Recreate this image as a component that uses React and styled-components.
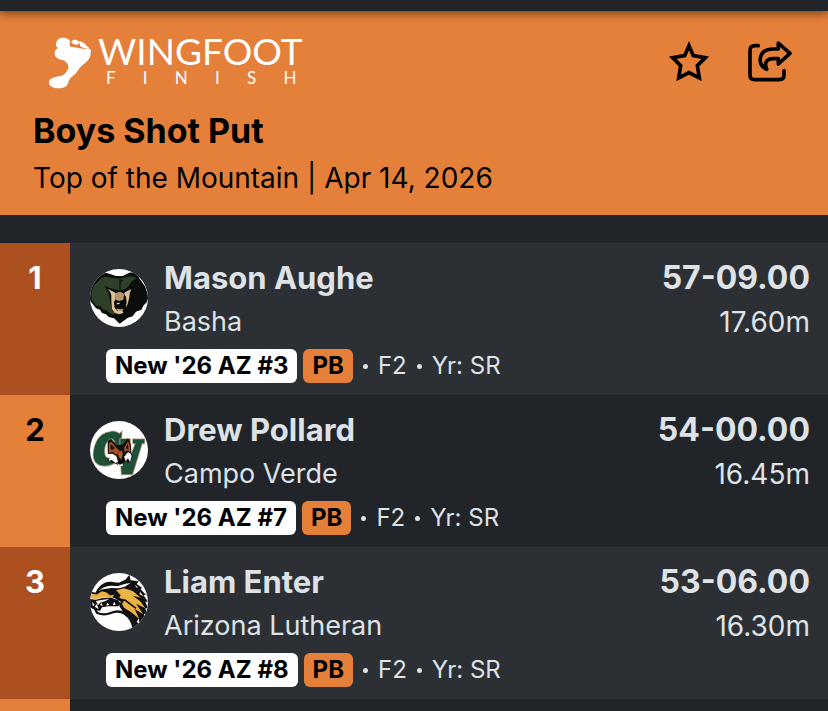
import styled, { createGlobalStyle } from 'styled-components';

const GlobalStyle = createGlobalStyle`
	* {
		box-sizing: border-box;
	}
	body {
		margin: 0;
		background: #212529;
		color: #dee2e6;
		font-family: 'Inter', 'Liberation Sans', sans-serif;
	}
`;

const NavEdge = styled.div`
	position: relative;
	height: 11px;
	background: #212529;
	box-shadow: 0 2px 10px rgba(0, 0, 0, 0.55);
`;

const Header = styled.header`
	padding: 26px 33px 14px;
	background: #e4803a;
	color: #000;
`;

const TopBar = styled.div`
	display: flex;
	justify-content: space-between;
	align-items: flex-start;
	height: 52px;
	margin-bottom: 18px;
	padding-left: 15px;
`;

const Brand = styled.a`
	display: flex;
	gap: 6px;
	color: #fff;
	text-decoration: none;
`;

const BrandText = styled.span`
	display: flex;
	flex-direction: column;
	font-family: 'Lato', 'Liberation Sans', sans-serif;
`;

const BrandName = styled.span`
	font-size: 37px;
	line-height: 28px;
`;

const BrandSub = styled.span`
	display: flex;
	justify-content: space-between;
	padding: 0 6px 0 8px;
	font-size: 17px;
	line-height: 26px;
`;

const Actions = styled.div`
	display: flex;
	align-items: center;
	gap: 38px;
	padding: 4px 3px 0 0;
`;

const IconButton = styled.button`
	display: flex;
	padding: 0;
	border: 0;
	background: none;
	color: #000;
	cursor: pointer;
`;

const Title = styled.h1`
	margin: 0;
	font-size: 34px;
	font-weight: 700;
	line-height: 48px;
`;

const Meet = styled.p`
	margin: 0;
	font-size: 28px;
	line-height: 46px;
`;

const Table = styled.table`
	width: 100%;
	margin-top: 28px;
	border-collapse: collapse;
`;

const Row = styled.tr`
	background: ${({ $odd }) => ($odd ? '#2c3034' : '#212529')};
	box-shadow: inset 0 1px 0 ${({ $odd }) => ($odd ? '#32373b' : '#1d2124')};
`;

const Rank = styled.th`
	width: 70px;
	padding: 13px 0 12px;
	background: ${({ $odd }) => ($odd ? '#ad501f' : '#e4803a')};
	color: ${({ $odd }) => ($odd ? '#fff' : '#000')};
	font-size: 31px;
	font-weight: 700;
	line-height: 44px;
	vertical-align: top;
`;

const Cell = styled.td`
	padding: 13px 20px 12px;
	vertical-align: top;
`;

const MarkCell = styled(Cell)`
	padding-right: 18px;
	text-align: right;
	white-space: nowrap;
`;

const Athlete = styled.div`
	display: flex;
	gap: 16px;
`;

const Avatar = styled.svg`
	width: 58px;
	height: 58px;
	margin-top: 13px;
	border-radius: 50%;
	background: #fff;
	flex-shrink: 0;
`;

const Strong = styled.div`
	font-size: ${({ $large }) => ($large ? '32px' : '31px')};
	font-weight: 700;
	line-height: 44px;
`;

const Sub = styled.div`
	font-size: ${({ $large }) => ($large ? '28px' : '27px')};
	line-height: 44px;
`;

const Notes = styled.div`
	display: flex;
	align-items: center;
	gap: 6px;
	margin-top: 5px;
	padding-left: 16px;
	font-size: 24px;
	line-height: 34px;
	white-space: nowrap;
`;

const Badge = styled.span`
	padding: 0 9px;
	border-radius: 6px;
	background: ${({ $accent }) => ($accent ? '#e4803a' : '#fff')};
	color: #000;
	font-weight: 700;
`;

const Extra = styled.span`
	display: flex;
	align-items: center;
	gap: 10px;
	padding-left: 4px;
`;

const Dot = styled.i`
	width: 5px;
	height: 5px;
	border-radius: 50%;
	background: currentColor;
`;

function FootIcon() {
	return (
		<svg width='44' height='52' viewBox='54 52 132 156' fill='#fff' aria-hidden='true'>
			<path d='M78 76C79 60 88 53 101 54C116 55 122 63 119 72C118 78 121 83 128 82C140 84 155 88 172 88C182 86 185 92 182 100C183 112 174 125 160 134C150 142 143 155 136 163C126 171 118 175 116 185C114 200 101 207 84 206C66 205 55 196 57 186C60 174 75 172 92 169C105 165 112 155 115 144C116 134 110 126 99 121C83 119 73 112 74 99C74 91 81 88 84 84C80 82 78 80 78 76Z' />
			<path d='M124 66C130 58 142 60 144 64C145 68 151 72 145 74C138 76 126 73 124 66Z' />
			<path d='M145 65C154 64 160 69 165 73C169 77 172 79 171 83C166 89 156 83 150 79C151 73 148 71 145 65Z' />
			<path d='M168 80C174 80 178 84 177 88L168 87Z' />
		</svg>
	);
}

function StarIcon() {
	return (
		<svg width='42' height='41' viewBox='54 62 126 123' fill='none' stroke='currentColor' strokeWidth='11' aria-hidden='true'>
			<path d='M117 76L130 106L166 112L142 136L148 173L117 157L86 173L92 136L68 112L104 106Z' />
		</svg>
	);
}

function ShareIcon() {
	return (
		<svg width='44' height='41' viewBox='295 62 132 123' fill='none' stroke='currentColor' strokeWidth='11' strokeLinecap='round' strokeLinejoin='round' aria-hidden='true'>
			<path d='M326 76H316Q301 76 301 90V164Q301 178 315 178H388Q403 178 403 165V151' />
			<path d='M386 68L421 99L386 131V115H371C350 115 343 128 351 147C336 140 330 128 332 114C335 94 350 86 370 86H386Z' />
		</svg>
	);
}

function BearLogo() {
	return (
		<Avatar viewBox='6 6 174 174' role='img' aria-label='Basha'>
			<path fill='#0c0e0d' d='M30 32C38 20 52 14 64 20L84 27H104L122 18C136 14 150 20 154 34L172 60L182 90L176 106L166 116L160 128L144 134L134 148L120 152L95 170L78 154L62 150L54 142L42 138L36 128L24 124L4 98L8 60Z' />
			<path fill='#2e4027' d='M32 42C40 28 54 27 64 31C84 37 106 34 126 28L146 32L130 44L122 58L108 68L96 70L74 66L54 60L64 78L68 104L72 128L80 138L78 144L64 138L55 130L45 128L36 117L23 116L10 94C8 72 16 54 32 42Z' />
			<path fill='none' stroke='#10150f' strokeWidth='4' d='M96 32V70M96 46L104 38' />
			<path fill='#0c0e0d' d='M50 56L74 67L96 72L118 67L140 58L132 80L126 116L118 132L104 142L84 142L74 132L66 104L62 80Z' />
			<path fill='#dcc198' d='M60 66L78 75L84 80L82 96L78 106L80 122L88 132L104 132L106 138L94 142L80 138L72 126L70 104L70 84L66 74Z' />
			<path fill='#dcc198' d='M130 66L112 75L108 80L114 90L116 106L113 122L119 112L124 90L126 76Z' />
			<path fill='#b99570' d='M84 78L96 74L108 80L106 98L94 102L82 98Z' />
			<path fill='#080909' d='M80 106L94 102L110 104L114 112L108 121L94 124L82 120Z' />
			<path fill='#e5e5e5' d='M87 108L96 107L93 112L86 112Z' />
			<path fill='#c7a67c' d='M84 125L98 127L106 125L104 131L90 132Z' />
		</Avatar>
	);
}

function CampoLogo() {
	return (
		<Avatar viewBox='31 25 174 174' role='img' aria-label='Campo Verde'>
			<g stroke='#b6a58b' strokeWidth='5' paintOrder='stroke' fill='#1e5038'>
				<path d='M89 59C101 53 113 59 119 64L126 58L124 96H108C106 80 96 73 87 81C75 91 70 116 77 131C84 142 99 137 109 130L111 146C97 158 78 162 61 157C44 151 39 135 43 113C48 82 65 61 89 59Z' />
				<path d='M122 79H151V92H147L149 142L168 92H160V80H194V92H187L158 185H126L122 130Z' />
			</g>
			<path fill='#101010' d='M84 120L84 85L94 78L111 96L129 96L145 77L154 97L155 120L160 132L151 149L144 151L137 143L130 158L116 158L104 151L83 144L90 133Z' />
			<path fill='#a84e21' d='M88 91L95 87L111 106L121 116L112 127L98 118L87 122Z' />
			<path fill='#a84e21' d='M145 86L151 100L152 119L143 113L135 119L133 106Z' />
			<path fill='#191414' d='M93 94L106 106L98 112L92 109ZM144 93L147 108L138 108Z' />
			<path fill='#fff' d='M82 125L98 123L110 130L115 147L108 151L96 142L87 145L90 136Z' />
			<path fill='#fff' d='M133 131L145 119L153 123L156 131L151 148L145 137L138 145Z' />
			<path fill='#b35b2b' d='M118 119L127 113L129 127L124 141L114 128Z' />
			<path fill='#0b0b0b' d='M108 127L119 129L116 134ZM129 129L139 124L136 131ZM116 143L130 143L127 153L120 153Z' />
			<path fill='#e9e9e9' d='M111 151L121 156L129 152L130 159L118 161Z' />
		</Avatar>
	);
}

function LutheranLogo() {
	return (
		<Avatar viewBox='6 6 174 174' role='img' aria-label='Arizona Lutheran'>
			<path fill='#111' d='M22 68C30 45 50 30 72 33L92 35L112 26L124 11L128 28L152 31L146 39L162 50L158 55L174 72L166 72L180 92L172 92L180 112L172 112L177 132L168 128L168 148L161 144L158 176L140 178C138 152 126 136 106 124L94 106L98 92L80 82L50 70L30 72Z' />
			<path fill='#fff' d='M32 60C48 44 68 42 88 46L112 38L128 36L110 47L92 52L70 51L50 54L36 63Z' />
			<path fill='#fff' d='M142 42L151 50L144 49ZM156 62L166 76L155 70ZM146 152L153 142L154 160Z' />
			<path fill='#ebb344' d='M84 58L108 52L134 60L158 80L134 74L156 90L172 112L144 98L166 130L140 114L154 144L130 124L108 110L102 98L108 90L94 80L98 72Z' />
			<path fill='#ebb344' d='M8 66L26 69L40 61L54 64L66 73L80 70L72 80L44 79L24 84L7 82Z' />
			<path fill='none' stroke='#111' strokeWidth='5' d='M6 65L26 68L42 57L62 59L80 67L66 71M92 84L112 88L144 112' />
			<path fill='#111' d='M6 84L24 86L44 81L70 80L90 88L99 98L90 106L60 106L42 109L36 120L22 116L6 106Z' />
			<path fill='#fff' d='M24 90L44 86L64 84L52 90L36 95L30 103ZM12 92L20 101L15 106ZM26 99L32 114L20 108ZM40 95L45 105L36 102ZM54 103L59 95L64 103ZM74 102L79 92L83 101Z' />
			<path fill='none' stroke='#111' strokeWidth='7' d='M6 106L20 112L28 126Q48 134 68 126Q92 116 110 128Q134 144 137 176' />
		</Avatar>
	);
}

const results = [
	{ rank: 1, name: 'Mason Aughe', school: 'Basha', mark: '57-09.00', metric: '17.60m', badge: "New '26 AZ #3", Logo: BearLogo },
	{ rank: 2, name: 'Drew Pollard', school: 'Campo Verde', mark: '54-00.00', metric: '16.45m', badge: "New '26 AZ #7", Logo: CampoLogo },
	{ rank: 3, name: 'Liam Enter', school: 'Arizona Lutheran', mark: '53-06.00', metric: '16.30m', badge: "New '26 AZ #8", Logo: LutheranLogo },
];

// top edge of the row that follows the listed results
const NextRow = styled.div`
	height: 12px;
	border-left: 70px solid #e4803a;
	background: #212529;
`;

function ResultRow({ result }) {
	const { rank, name, school, mark, metric, badge, Logo } = result;
	const odd = rank % 2 === 1;

	return (
		<Row $odd={odd}>
			<Rank scope='row' $odd={odd}>
				{rank}
			</Rank>
			<Cell>
				<Athlete>
					<Logo />
					<div>
						<Strong>{name}</Strong>
						<Sub>{school}</Sub>
					</div>
				</Athlete>
				<Notes>
					<Badge>{badge}</Badge>
					<Badge $accent>PB</Badge>
					<Extra>
						<Dot />
						<span>F2</span>
						<Dot />
						<span>Yr: SR</span>
					</Extra>
				</Notes>
			</Cell>
			<MarkCell>
				<Strong $large>{mark}</Strong>
				<Sub $large>{metric}</Sub>
			</MarkCell>
		</Row>
	);
}

function App() {
	return (
		<>
			<GlobalStyle />
			<NavEdge />
			<Header>
				<TopBar>
					<Brand href='#'>
						<FootIcon />
						<BrandText>
							<BrandName>WINGFOOT</BrandName>
							<BrandSub>
								{[...'FINISH'].map((letter, idx) => (
									<span key={idx}>{letter}</span>
								))}
							</BrandSub>
						</BrandText>
					</Brand>
					<Actions>
						<IconButton type='button' aria-label='Favorite'>
							<StarIcon />
						</IconButton>
						<IconButton type='button' aria-label='Share'>
							<ShareIcon />
						</IconButton>
					</Actions>
				</TopBar>
				<Title>Boys Shot Put</Title>
				<Meet>Top of the Mountain | Apr 14, 2026</Meet>
			</Header>
			<main>
				<Table>
					<tbody>
						{results.map((result) => (
							<ResultRow key={result.rank} result={result} />
						))}
					</tbody>
				</Table>
				<NextRow />
			</main>
		</>
	);
}

export default App;
